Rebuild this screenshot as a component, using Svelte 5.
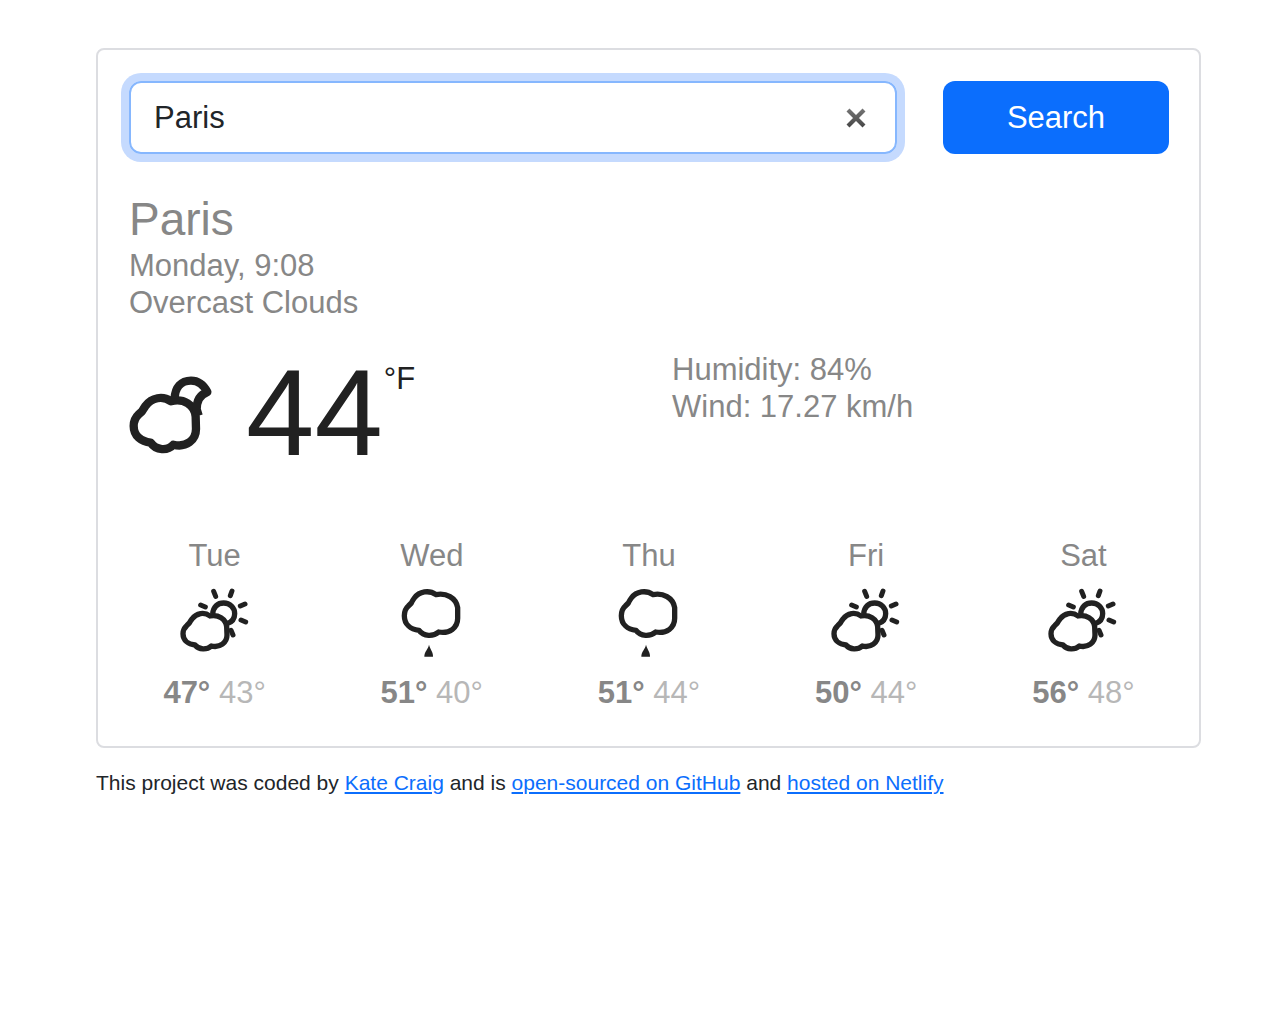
<script>
  let city = $state('Paris');

  const forecast = [
    { day: 'Tue', icon: 'sun', max: 47, min: 43 },
    { day: 'Wed', icon: 'rain', max: 51, min: 40 },
    { day: 'Thu', icon: 'rain', max: 51, min: 44 },
    { day: 'Fri', icon: 'sun', max: 50, min: 44 },
    { day: 'Sat', icon: 'sun', max: 56, min: 48 }
  ];
</script>

<div class="page">
  <main class="card">
    <form class="search" onsubmit={(e) => e.preventDefault()}>
      <div class="field">
        <input type="text" aria-label="City" bind:value={city} />
        <button class="clear" type="button" aria-label="Clear" onclick={() => (city = '')}>
          <svg viewBox="0 0 20 20" aria-hidden="true">
            <defs>
              <linearGradient id="shade" x1="0" y1="0" x2="0" y2="20" gradientUnits="userSpaceOnUse">
                <stop offset="0" stop-color="#777" />
                <stop offset="1" stop-color="#444" />
              </linearGradient>
            </defs>
            <path d="M2 2 18 18M18 2 2 18" fill="none" stroke="url(#shade)" stroke-width="4.2" />
          </svg>
        </button>
      </div>
      <button class="submit" type="submit">Search</button>
    </form>

    <header class="place">
      <h1>Paris</h1>
      <p>Monday, 9:08</p>
      <p>Overcast Clouds</p>
    </header>

    <section class="current">
      <div class="reading">
        <svg class="now" viewBox="57 42 252 243" aria-hidden="true">
          <g fill="none" stroke="#212121" stroke-width="25" stroke-linejoin="round">
            <path d="M183 124C158 106 125 113 107 137Q101 146 96 154L86 163Q71 177 71 198C71 228 94 245 122 248C138 272 173 273 190 254C229 264 258 240 258 207L257 170C254 134 220 114 183 124Z" />
            <path d="M194 116C195 82 214 62 243 62C264 62 281 75 292 96C270 104 260 122 260 148L266 167" />
          </g>
        </svg>
        <span class="degrees">44</span>
        <span class="unit">°F</span>
      </div>
      <div class="details">
        <p>Humidity: 84%</p>
        <p>Wind: 17.27 km/h</p>
      </div>
    </section>

    <section class="forecast">
      {#each forecast as item}
        <div class="day">
          <p>{item.day}</p>
          {#if item.icon === 'sun'}
            <svg viewBox="40 33 216 216" aria-hidden="true">
              <g fill="none" stroke="#212121" stroke-width="16" stroke-linejoin="round">
                <path d="M133 123C116 110 92 114 79 132Q74 138 71 144L63 152Q52 162 52 176C52 196 68 208 88 210C100 225 124 225 137 213C163 219 184 203 184 180L183 155C180 131 158 118 133 123Z" />
                <path d="M141 117C143 95 156 84 174 84C193 84 207 98 207 116C207 130 200 141 184 146" />
              </g>
              <path d="M144 49 150 64M199 48 194 62M105 90 119 96M224 93 238 87M226 135 240 141M196 166 202 180" fill="none" stroke="#212121" stroke-width="15" stroke-linecap="round" />
            </svg>
          {:else}
            <svg viewBox="32 33 216 216" aria-hidden="true">
              <path d="M152 59C131 44 102 49 87 69Q81 77 78 84L69 93Q57 104 57 122C57 148 76 163 101 166C115 185 144 185 160 171C192 177 217 159 217 130L217 98C212 68 182 53 152 59Z" fill="none" stroke="#212121" stroke-width="16" stroke-linejoin="round" />
              <path d="M131 209C129 222 117 229 117 245L143 245C144 231 134 222 131 209Z" fill="#212121" />
            </svg>
          {/if}
          <p><strong>{item.max}°</strong> <span class="low">{item.min}°</span></p>
        </div>
      {/each}
    </section>
  </main>

  <footer>
    This project was coded by <a href="#author">Kate Craig</a> and is
    <a href="#github">open-sourced on GitHub</a> and <a href="#netlify">hosted on Netlify</a>
  </footer>
</div>

<style>
  :global(body) {
    margin: 0;
    background: #fff;
  }
  .page {
    padding: 48px 79px 48px 96px;
    font-family: 'Liberation Sans', Arial, sans-serif;
    font-size: 31px;
    line-height: 37px;
    color: #212529;
  }
  .card {
    padding: 31px 30px 35px 31px;
    border: 2px solid #dcdde1;
    border-radius: 8px;
    color: #878787;
  }
  p,
  h1 {
    margin: 0;
  }
  .search {
    display: grid;
    grid-template-columns: 768fr 226fr;
    gap: 46px;
  }
  .field {
    display: flex;
    align-items: center;
    box-sizing: border-box;
    height: 73px;
    padding: 0 29px 0 23px;
    border: 2px solid #86b7fe;
    border-radius: 12px;
    box-shadow: 0 0 0 8px #c5dafe;
  }
  input {
    flex: 1;
    min-width: 0;
    padding: 0;
    border: 0;
    outline: 0;
    background: none;
    font: inherit;
    color: #212529;
  }
  .clear {
    display: flex;
    padding: 0;
    border: 0;
    background: none;
  }
  .clear svg {
    width: 20px;
    height: 20px;
  }
  .submit {
    padding: 0;
    border: 0;
    border-radius: 12px;
    background: #0b6efd;
    color: #fff;
    font: inherit;
  }
  .place {
    margin-top: 37px;
  }
  h1 {
    font-size: 46px;
    font-weight: 400;
    line-height: 56px;
  }
  .current {
    display: grid;
    grid-template-columns: 1fr 1fr;
    gap: 46px;
    margin-top: 30px;
  }
  .reading {
    display: flex;
    align-items: flex-start;
    color: #212121;
  }
  .now {
    width: 84px;
    height: 81px;
    margin: 23px 33px 0 0;
  }
  .degrees {
    font-size: 123px;
    line-height: 123px;
  }
  .unit {
    margin-top: 9px;
    padding-left: 1px;
  }
  .forecast {
    display: grid;
    grid-template-columns: repeat(5, 1fr);
    gap: 46px;
    margin-top: 63px;
    text-align: center;
  }
  .day svg {
    display: block;
    width: 72px;
    height: 72px;
    margin: 12px auto 16px;
  }
  .low {
    color: #b7b7b7;
  }
  footer {
    margin-top: 16px;
    font-size: 21px;
  }
  a {
    color: #0b6efd;
  }
</style>
